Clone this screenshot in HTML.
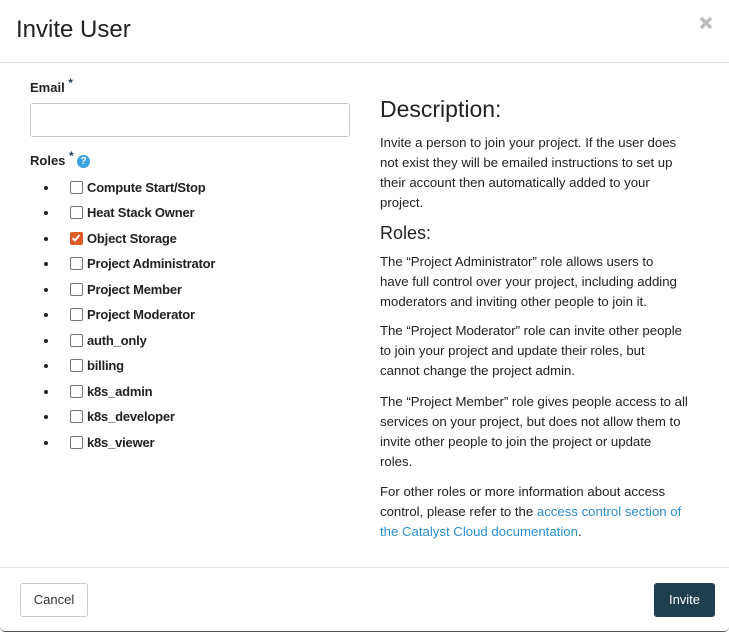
<!DOCTYPE html>
<html><head><meta charset="utf-8"><style>
*{margin:0;padding:0;box-sizing:border-box}
body{width:729px;height:633px;background:#fff;font-family:"Liberation Sans",sans-serif;color:#222;position:relative;overflow:hidden}
.dlg{position:absolute;left:0;top:-6px;width:729px;height:638px;background:#fff;border-radius:5px;border-bottom:1.5px solid #555}
.a{position:absolute;white-space:nowrap}
.hr{position:absolute;left:0;width:729px;height:1px;background:#e2e2e2}
.lbl{font-weight:bold;font-size:13px}
.star{color:#1e3f4f;font-size:12px;position:relative;top:-5px}
.li{position:absolute;left:44px;font-size:13px;font-weight:bold;height:16px;line-height:16px;white-space:nowrap;width:300px}
.li .b{position:absolute;left:0;top:6px;width:4px;height:4px;border-radius:50%;background:#222}
.li .c{position:absolute;left:26px;top:1px;width:13px;height:13px;border:1.5px solid #777;border-radius:2px;background:#fff}
.li .t{position:absolute;left:43px;top:0;letter-spacing:-0.2px}
.r{position:absolute;left:380px;font-size:13.2px;line-height:20px;color:#222;white-space:nowrap}
a{color:#2a8fcf;text-decoration:none}
</style></head><body>
<div class="dlg"></div>
<div class="a" style="left:16px;top:16px;font-size:24px;color:#222">Invite User</div>
<svg class="a" style="left:699px;top:16px" width="14" height="14" viewBox="0 0 14 14"><path d="M2 2L12 12M12 2L2 12" stroke="#bdbdbd" stroke-width="3.4"/></svg>
<div class="hr" style="top:62px"></div>
<div class="a lbl" style="left:30px;top:80px">Email <span class="star">*</span></div>
<div class="a" style="left:30px;top:103px;width:320px;height:34px;border:1px solid #ccc;border-radius:3px"></div>
<div class="a lbl" style="left:30px;top:153px">Roles <span class="star">*</span></div>
<div class="a" style="left:77px;top:155px;width:13px;height:13px;border-radius:50%;background:#3aa3e0;color:#fff;font-size:10px;font-weight:bold;text-align:center;line-height:13px">?</div>

<div class="li" style="top:180px"><span class="b"></span><span class="c"></span><span class="t">Compute Start/Stop</span></div>
<div class="li" style="top:205px"><span class="b"></span><span class="c"></span><span class="t">Heat Stack Owner</span></div>
<div class="li" style="top:231px"><span class="b"></span><span class="c" style="background:#e05a28;border-color:#e05a28"><svg width="10" height="10" viewBox="0 0 10 10" style="position:absolute;left:0;top:0"><path d="M1.5 5L4 7.5L8.5 2" stroke="#fff" stroke-width="1.8" fill="none"/></svg></span><span class="t">Object Storage</span></div>
<div class="li" style="top:256px"><span class="b"></span><span class="c"></span><span class="t">Project Administrator</span></div>
<div class="li" style="top:282px"><span class="b"></span><span class="c"></span><span class="t">Project Member</span></div>
<div class="li" style="top:307px"><span class="b"></span><span class="c"></span><span class="t">Project Moderator</span></div>
<div class="li" style="top:333px"><span class="b"></span><span class="c"></span><span class="t">auth_only</span></div>
<div class="li" style="top:358px"><span class="b"></span><span class="c"></span><span class="t">billing</span></div>
<div class="li" style="top:384px"><span class="b"></span><span class="c"></span><span class="t">k8s_admin</span></div>
<div class="li" style="top:409px"><span class="b"></span><span class="c"></span><span class="t">k8s_developer</span></div>
<div class="li" style="top:435px"><span class="b"></span><span class="c"></span><span class="t">k8s_viewer</span></div>

<div class="a" style="left:380px;top:96px;font-size:23px;color:#222">Description:</div>
<div class="r" style="top:133px">Invite a person to join your project. If the user does<br>not exist they will be emailed instructions to set up<br>their account then automatically added to your<br>project.</div>
<div class="a" style="left:380px;top:223px;font-size:18px;color:#222">Roles:</div>
<div class="r" style="top:252px">The “Project Administrator” role allows users to<br>have full control over your project, including adding<br>moderators and inviting other people to join it.</div>
<div class="r" style="top:321px">The “Project Moderator” role can invite other people<br>to join your project and update their roles, but<br>cannot change the project admin.</div>
<div class="r" style="top:392px">The “Project Member” role gives people access to all<br>services on your project, but does not allow them to<br>invite other people to join the project or update<br>roles.</div>
<div class="r" style="top:482px">For other roles or more information about access<br>control, please refer to the <a>access control section of</a><br><a>the Catalyst Cloud documentation</a>.</div>

<div class="hr" style="top:567px"></div>
<div class="a" style="left:20px;top:583px;width:68px;height:34px;border:1px solid #ccc;border-radius:3px;font-size:13px;text-align:center;line-height:32px;color:#333">Cancel</div>
<div class="a" style="left:654px;top:583px;width:61px;height:34px;background:#1e3f4f;border-radius:3px;font-size:13px;text-align:center;line-height:34px;color:#fff">Invite</div>
</body></html>
